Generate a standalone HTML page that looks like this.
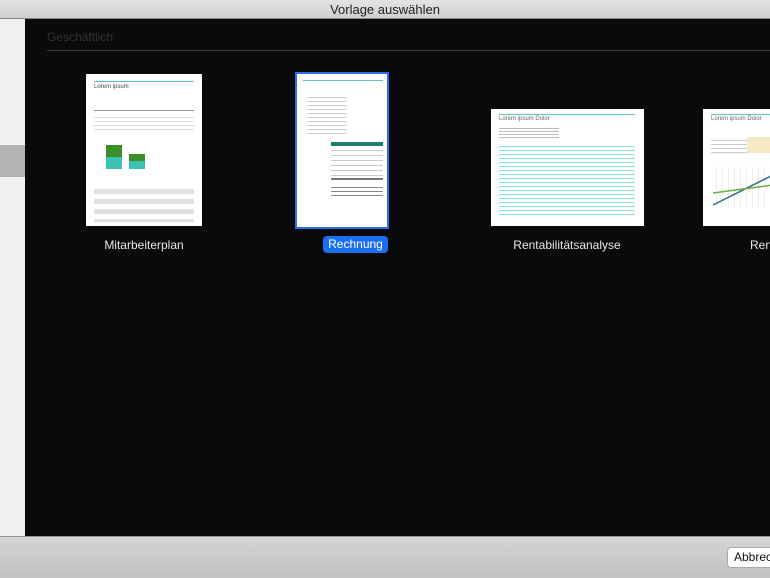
<!DOCTYPE html>
<html><head><meta charset="utf-8"><style>
*{margin:0;padding:0;box-sizing:border-box}
body{width:770px;height:578px;overflow:hidden;background:#0a0a0a;font-family:"Liberation Sans",sans-serif;position:relative}
.abs{position:absolute}
.title{left:0;top:0;width:770px;height:19px;background:linear-gradient(#e4e4e4,#cfcfcf);border-bottom:1px solid #888;text-align:center;font-size:13px;line-height:19px;color:#222}
.side{left:0;top:19px;width:25px;height:517px;background:#efefef}
.bottom{left:0;top:536px;width:770px;height:42px;background:linear-gradient(#d4d4d4,#c2c2c2);border-top:1px solid #999}
.doc{background:#fff}
.lbl{color:#e8e8e8;font-size:12px;text-align:center;width:200px}
.t{background:#5cc7b8;height:1px;position:absolute}
.g{background:#bbb;height:1px;position:absolute}
</style></head><body>
<div class="abs title">Vorlage auswählen</div>
<div class="abs side"><div class="abs" style="left:0;top:126px;width:25px;height:32px;background:#b3b3b3"></div></div>
<div class="abs" style="left:47px;top:30px;font-size:12px;color:#333">Geschäftlich</div>
<div class="abs" style="left:47px;top:50px;width:723px;height:1px;background:#3a3a3a"></div>

<!-- Mitarbeiterplan -->
<div class="abs doc" style="left:86px;top:74px;width:116px;height:152px">
<div class="t" style="left:8px;top:7px;width:100px"></div>
<div class="abs" style="left:8px;top:10px;font-size:6px;color:#444">Lorem ipsum</div>
<div class="g" style="left:8px;top:36px;width:100px;background:#999"></div>
<div class="abs" style="left:8px;top:40px;width:100px;height:18px;background:repeating-linear-gradient(#fff 0 3px,#ddd 3px 4px)"></div>
<div class="abs" style="left:20px;top:71px;width:16px;height:12px;background:#3b8f2a"></div>
<div class="abs" style="left:20px;top:83px;width:16px;height:12px;background:#3cc1b2"></div>
<div class="abs" style="left:43px;top:80px;width:16px;height:7px;background:#3b8f2a"></div>
<div class="abs" style="left:43px;top:87px;width:16px;height:8px;background:#3cc1b2"></div>
<div class="abs" style="left:8px;top:110px;width:100px;height:38px;background:repeating-linear-gradient(#fff 0 5px,#e0e0e0 5px 10px)"></div>
</div>
<div class="abs lbl" style="left:44px;top:238px">Mitarbeiterplan</div>

<!-- Rechnung -->
<div class="abs doc" style="left:295px;top:72px;width:94px;height:157px;border:2px solid #2a6ff0">
<div class="t" style="left:6px;top:6px;width:80px"></div>
<div class="abs" style="left:34px;top:68px;width:52px;height:4px;background:#1f7d6e"></div>
<div class="abs" style="left:34px;top:72px;width:52px;height:30px;background:repeating-linear-gradient(#fff 0 4px,#ccc 4px 5px)"></div>
<div class="abs" style="left:34px;top:104px;width:52px;height:2px;background:#777"></div>
<div class="abs" style="left:34px;top:110px;width:52px;height:12px;background:repeating-linear-gradient(#fff 0 3px,#888 3px 4px)"></div>
<div class="abs" style="left:10px;top:20px;width:40px;height:40px;background:repeating-linear-gradient(#fff 0 3px,#ccc 3px 4px)"></div>
</div>
<div class="abs" style="left:323px;top:236px;width:65px;height:17px;background:#1a6ff0;border-radius:4px;color:#fff;font-size:12px;text-align:center;line-height:17px">Rechnung</div>

<!-- Rentabilitätsanalyse -->
<div class="abs doc" style="left:491px;top:109px;width:153px;height:117px">
<div class="t" style="left:8px;top:5px;width:136px"></div>
<div class="abs" style="left:8px;top:7px;font-size:6px;color:#666">Lorem ipsum Dolor</div>
<div class="abs" style="left:8px;top:17px;width:60px;height:12px;background:repeating-linear-gradient(#fff 0 2px,#bbb 2px 3px)"></div>
<div class="abs" style="left:8px;top:34px;width:136px;height:74px;background:repeating-linear-gradient(#fff 0 3px,#8fdcd0 3px 4px)"></div>
</div>
<div class="abs lbl" style="left:467px;top:238px">Rentabilitätsanalyse</div>

<!-- 4th -->
<div class="abs doc" style="left:703px;top:109px;width:80px;height:117px">
<div class="t" style="left:8px;top:5px;width:70px"></div>
<div class="abs" style="left:8px;top:7px;font-size:6px;color:#666;white-space:nowrap">Lorem ipsum Dolor</div>
<div class="abs" style="left:8px;top:28px;width:62px;height:16px;background:repeating-linear-gradient(#fff 0 3px,#ccc 3px 4px)"></div>
<div class="abs" style="left:44px;top:28px;width:26px;height:16px;background:#f7e9c5"></div>
<div class="abs" style="left:8px;top:58px;width:62px;height:40px;background:repeating-linear-gradient(90deg,#fff 0 5px,#eee 5px 6px)"></div>
<svg class="abs" style="left:8px;top:58px" width="62" height="40"><line x1="2" y1="38" x2="62" y2="8" stroke="#2f6f8f" stroke-width="1.5"/><line x1="2" y1="26" x2="62" y2="18" stroke="#6aae3a" stroke-width="1.5"/></svg>
</div>
<div class="abs" style="left:750px;top:238px;color:#e8e8e8;font-size:12px">Ren</div>

<div class="abs bottom">
<div class="abs" style="left:727px;top:10px;width:60px;height:21px;background:#fff;border:1px solid #aaa;border-radius:4px;font-size:12px;line-height:19px;padding-left:6px;color:#111">Abbrechen</div>
</div>
</body></html>
